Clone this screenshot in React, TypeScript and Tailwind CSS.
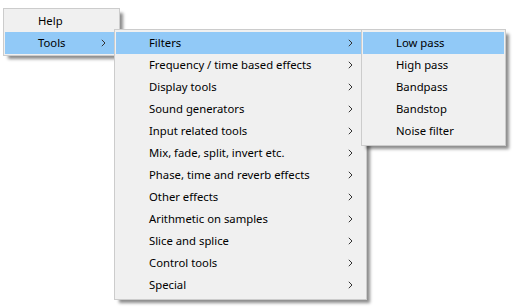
import type { ReactNode } from "react";

const font = { fontFamily: '"Noto Sans", "Open Sans", sans-serif' };

function Chevron() {
  return (
    <svg width="5" height="8" viewBox="0 0 5 8" className="shrink-0">
      <path d="M0.8 0.8 L4 4 L0.8 7.2" fill="none" stroke="#333" strokeWidth="1" />
    </svg>
  );
}

function Item({ label, active, sub }: { label: string; active?: boolean; sub?: boolean }) {
  return (
    <div
      className={`flex h-[22px] items-center pl-[33px] pr-[12px] ${active ? "bg-[#91c9f7]" : ""}`}
    >
      <span className="flex-1 whitespace-nowrap text-[11.3px] leading-[22px] text-black">{label}</span>
      {sub && <Chevron />}
    </div>
  );
}

function Menu({ className, children }: { className: string; children: ReactNode }) {
  return (
    <div
      className={`flex flex-col border border-[#cccccc] bg-[#f0f0f0] px-[1px] shadow-[4px_4px_3px_-1px_rgba(0,0,0,0.45)] ${className}`}
    >
      {children}
    </div>
  );
}

const effects = [
  "Filters",
  "Frequency / time based effects",
  "Display tools",
  "Sound generators",
  "Input related tools",
  "Mix, fade, split, invert etc.",
  "Phase, time and reverb effects",
  "Other effects",
  "Arithmetic on samples",
  "Slice and splice",
  "Control tools",
  "Special",
];

const filters = ["Low pass", "High pass", "Bandpass", "Bandstop", "Noise filter"];

export default function App() {
  return (
    <div className="relative h-[307px] w-[519px] overflow-hidden bg-white" style={font}>
      <Menu className="absolute left-[3px] top-[8px] w-[117px] py-[1px]">
        <Item label="Help" />
        <Item label="Tools" active sub />
      </Menu>
      <Menu className="absolute left-[114px] top-[29px] w-[253px] pt-[2px] pb-[3px]">
        {effects.map((e, i) => (
          <Item key={e} label={e} active={i === 0} sub />
        ))}
      </Menu>
      <Menu className="absolute left-[361px] top-[29px] w-[145px] pt-[2px] pb-[3px]">
        {filters.map((f, i) => (
          <Item key={f} label={f} active={i === 0} />
        ))}
      </Menu>
    </div>
  );
}
